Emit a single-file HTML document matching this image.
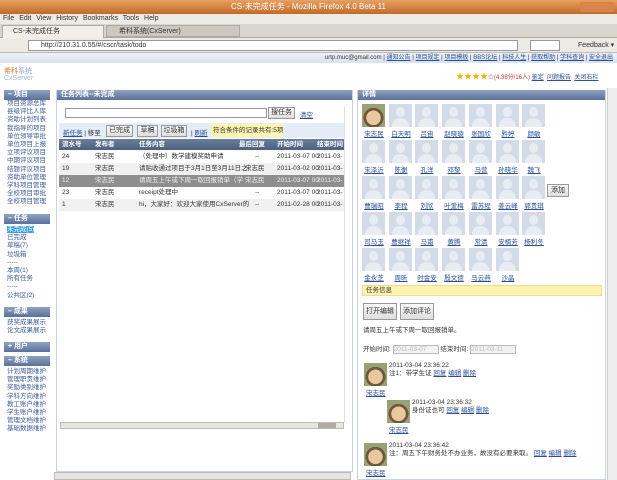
<!DOCTYPE html>
<html><head><meta charset="utf-8">
<style>
*{margin:0;padding:0;box-sizing:border-box}
body{width:617px;height:480px;overflow:hidden;background:#fff;font-family:"Liberation Sans","Noto Sans CJK SC",sans-serif;font-size:7px;color:#333;position:relative}
.a{position:absolute;white-space:nowrap}
.lnk{color:#2a4f9a;text-decoration:underline}
.hd{background:linear-gradient(#8fa3c0,#5a7199);color:#fff;font-weight:bold;font-size:7px;padding-left:4px;line-height:10px;height:10px}
.av{position:absolute;width:23px;height:23px;background:#d3dbe8}
.av:before{content:"";position:absolute;left:7px;top:3px;width:9px;height:10px;border-radius:50%;background:#e8edf4}
.av:after{content:"";position:absolute;left:3px;top:14px;width:17px;height:9px;border-radius:8px 8px 0 0;background:#e8edf4}
.nm{position:absolute;width:26px;text-align:center;font-size:6.5px;color:#2a4f9a;text-decoration:underline}
.face{position:absolute;width:23px;height:23px;background:radial-gradient(circle at 50% 60%,#e9c8a0 0 40%,#6b5a3a 41% 55%,#9aa078 56%)}
.btn{position:absolute;border:1px solid #999;background:linear-gradient(#fafafa,#ddd);font-size:7px;text-align:center}
</style></head><body>
<!-- title bar -->
<div class="a" style="left:0;top:0;width:617px;height:14px;background:linear-gradient(#e8a060,#c06a2a);color:#fff;font-size:8px;line-height:14px;text-align:center">CS-未完成任务 - Mozilla Firefox 4.0 Beta 11</div>
<div class="a" style="left:580px;top:2px;width:34px;height:10px;background:#d8844a;border-radius:2px"></div>
<!-- menu -->
<div class="a" style="left:0;top:14px;width:617px;height:10px;background:#ede9e3;font-size:7px;line-height:10px;padding-left:3px;word-spacing:3px">File Edit View History Bookmarks Tools Help</div>
<!-- tabs -->
<div class="a" style="left:0;top:24px;width:617px;height:14px;background:#d9d4cc;border-bottom:1px solid #aaa"></div>
<div class="a" style="left:2px;top:25px;width:102px;height:13px;background:#f2efea;border:1px solid #aaa;border-bottom:none;font-size:7px;line-height:12px;padding-left:10px">CS-未完成任务</div>
<div class="a" style="left:106px;top:25px;width:134px;height:12px;background:#cdc7be;border:1px solid #aaa;font-size:7px;line-height:11px;padding-left:12px">希科系统(CxServer)</div>
<!-- nav -->
<div class="a" style="left:0;top:38px;width:617px;height:15px;background:#ede9e3;border-bottom:1px solid #bbb"></div>
<div class="a" style="left:28px;top:40px;width:490px;height:11px;background:#fff;border:1px solid #999;font-size:7px;line-height:9px;padding-left:12px">http://210.31.0.55/#/cscr/task/todo</div>
<div class="a" style="left:530px;top:40px;width:30px;height:11px;background:#fff;border:1px solid #999"></div>
<div class="a" style="left:578px;top:40px;font-size:7px;line-height:11px">Feedback ▾</div>
<!-- top links -->
<div class="a" style="left:0;top:53px;width:617px;height:10px;background:linear-gradient(#eef2f8,#d8e1ee);font-size:6px;line-height:10px;text-align:right;padding-right:4px">urtp.muc@gmail.com | <span class="lnk">通知公告</span> | <span class="lnk">项目规定</span> | <span class="lnk">项目模板</span> | <span class="lnk">BBS论坛</span> | <span class="lnk">科技人生</span> | <span class="lnk">获取帮助</span> | <span class="lnk">学科查询</span> | <span class="lnk">安全退出</span></div>
<!-- logo -->
<div class="a" style="left:4px;top:68px;font-size:7px;line-height:7px;color:#e07a30">希科<span style="color:#8aa6d0">系统</span><br><span style="color:#a9bbd8">CxServer</span></div>
<div class="a" style="left:456px;top:71px;font-size:6px;color:#c33"><span style="color:#f0b000;font-size:8px">★★★★</span>☆(4.38分/16人) <span class="lnk">鉴定</span> &nbsp;<span class="lnk">问题报告</span> &nbsp;<span class="lnk">关闭右栏</span></div>
<!-- left sidebar -->
<div class="a hd" style="left:4px;top:90px;width:46px">– 项目</div>
<div class="a" style="left:7px;top:100px;font-size:6.5px;line-height:8.2px;color:#3a5a9a">项目资源总库<br>县级评比人库<br>资助计划列表<br>我指导的项目<br>单位领导审批<br>单位项目上报<br>立项评议项目<br>中期评议项目<br>结题评议项目<br>资助单位管理<br>学科项目管理<br>全校项目审批<br>全校项目管理</div>
<div class="a hd" style="left:4px;top:214px;width:46px">– 任务</div>
<div class="a" style="left:7px;top:226px;font-size:6.5px;line-height:8.2px;color:#3a5a9a"><span style="background:#3aa0e8;color:#fff">未完成(5)</span><br>已完成<br>草稿(7)<br>垃圾箱<br>-----<br>本周(1)<br>所有任务<br>-----<br>公共区(2)</div>
<div class="a hd" style="left:4px;top:307px;width:46px">– 成果</div>
<div class="a" style="left:7px;top:319px;font-size:6.5px;line-height:8.2px;color:#3a5a9a">获奖成果展示<br>论文成果展示</div>
<div class="a hd" style="left:4px;top:342px;width:46px">+ 用户</div>
<div class="a hd" style="left:4px;top:356px;width:46px">– 系统</div>
<div class="a" style="left:7px;top:368px;font-size:6.5px;line-height:8.2px;color:#3a5a9a">计划周期维护<br>管理职责维护<br>奖励类别维护<br>学科方向维护<br>教工账户维护<br>学生账户维护<br>管理文档维护<br>基础数据维护</div>
<!-- middle -->
<div class="a" style="left:56px;top:90px;width:297px;height:382px;border:1px solid #c8d2e0"></div>
<div class="a hd" style="left:57px;top:90px;width:295px">任务列表--未完成</div>
<div class="a" style="left:65px;top:108px;width:202px;height:10px;border:1px solid #999"></div>
<div class="btn" style="left:268px;top:107px;width:27px;height:12px;line-height:10px">搜任务</div>
<div class="a lnk" style="left:300px;top:109px;font-size:6.5px">清空</div>
<div class="a" style="left:59px;top:123px;width:285px;height:15px;background:#e4ecf6"></div>
<div class="a" style="left:63px;top:127px;font-size:6.5px"><span class="lnk">新任务</span> | 移至</div>
<div class="btn" style="left:106px;top:125px;width:27px;height:12px;line-height:10px">已完成</div>
<div class="btn" style="left:137px;top:125px;width:21px;height:12px;line-height:10px">草稿</div>
<div class="btn" style="left:161px;top:125px;width:26px;height:12px;line-height:10px">垃圾箱</div>
<div class="a" style="left:191px;top:127px;font-size:6.5px">| <span class="lnk">刷新</span></div>
<div class="a" style="left:211px;top:124px;width:72px;height:13px;background:#fff4b0;font-size:6.5px;line-height:13px;padding-left:2px">符合条件的记录共有:5项</div>
<div class="a" style="left:59px;top:139px;width:285px;height:11px;background:linear-gradient(#6a7d9a,#4d6080);color:#fff;font-size:6.5px;line-height:11px;font-weight:bold">
<span class="a" style="left:3px">流水号</span><span class="a" style="left:36px">发布者</span><span class="a" style="left:80px">任务内容</span><span class="a" style="left:180px">最后回复</span><span class="a" style="left:218px">开始时间</span><span class="a" style="left:258px">结束时间</span></div>
<div class="a" style="left:59px;top:151px;width:285px;font-size:6.5px;line-height:12px">
<div style="height:12px;position:relative"><span class="a" style="left:3px">24</span><span class="a" style="left:36px">宋志民</span><span class="a" style="left:80px">（处理中）数学建模奖助申请</span><span class="a" style="left:196px">--</span><span class="a" style="left:218px">2011-03-07 00:</span><span class="a" style="left:258px">2011-03-</span></div>
<div style="height:12px;position:relative;background:#f0f0f0"><span class="a" style="left:3px">19</span><span class="a" style="left:36px">宋志民</span><span class="a" style="left:80px">请贴收通过项目于3月1日至3月11日之</span><span class="a" style="left:186px">宋志民</span><span class="a" style="left:218px">2011-03-02 00:</span><span class="a" style="left:258px">2011-03-</span></div>
<div style="height:12px;position:relative;background:#8e8e8e;color:#eee"><span class="a" style="left:3px">12</span><span class="a" style="left:36px">宋志民</span><span class="a" style="left:80px">请周五上午或下周一取回报销单（学</span><span class="a" style="left:186px">宋志民</span><span class="a" style="left:218px">2011-03-07 00:</span><span class="a" style="left:258px">2011-03-</span></div>
<div style="height:12px;position:relative"><span class="a" style="left:3px">23</span><span class="a" style="left:36px">宋志民</span><span class="a" style="left:80px">receipt处理中</span><span class="a" style="left:196px">--</span><span class="a" style="left:218px">2011-03-07 00:</span><span class="a" style="left:258px">2011-03-</span></div>
<div style="height:12px;position:relative;background:#f0f0f0"><span class="a" style="left:3px">1</span><span class="a" style="left:36px">宋志民</span><span class="a" style="left:80px">hi，大家好：欢迎大家使用CxServer的</span><span class="a" style="left:196px">--</span><span class="a" style="left:218px">2011-02-28 00:</span><span class="a" style="left:258px">2011-03-</span></div>
</div>
<div class="a" style="left:344px;top:107px;width:1px;height:315px;background:#dde"></div>
<div class="a" style="left:60px;top:422px;width:284px;height:7px;background:#e8e4de;border:1px solid #bbb"></div>
<div class="a" style="left:318px;top:423px;width:18px;height:5px;background:#b5aaa0"></div>
<div class="a" style="left:54px;top:472px;width:297px;height:8px;background:#e8e4de;border:1px solid #bbb"></div>
<!-- right -->
<div class="a" style="left:357px;top:90px;width:249px;height:390px;border:1px solid #c8d2e0"></div>
<div class="a hd" style="left:358px;top:90px;width:247px">详情</div>
<div class="a" style="left:607px;top:88px;width:10px;height:392px;background:#eee;border-left:1px solid #ccc"></div>
<div class="face" style="left:362px;top:104px"></div>
<div class="av" style="left:389px;top:104px"></div><div class="av" style="left:415px;top:104px"></div><div class="av" style="left:442px;top:104px"></div><div class="av" style="left:469px;top:104px"></div><div class="av" style="left:496px;top:104px"></div><div class="av" style="left:522px;top:104px"></div>
<div class="nm" style="left:361px;top:128px">宋志民</div><div class="nm" style="left:388px;top:128px">白天明</div><div class="nm" style="left:414px;top:128px">吕宙</div><div class="nm" style="left:441px;top:128px">赵晓璇</div><div class="nm" style="left:468px;top:128px">张国欣</div><div class="nm" style="left:495px;top:128px">黔婷</div><div class="nm" style="left:521px;top:128px">颜敏</div>
<div class="av" style="left:362px;top:140px"></div><div class="av" style="left:389px;top:140px"></div><div class="av" style="left:415px;top:140px"></div><div class="av" style="left:442px;top:140px"></div><div class="av" style="left:469px;top:140px"></div><div class="av" style="left:496px;top:140px"></div><div class="av" style="left:522px;top:140px"></div>
<div class="nm" style="left:361px;top:164px">宋泽沂</div><div class="nm" style="left:388px;top:164px">陈衡</div><div class="nm" style="left:414px;top:164px">孔洋</div><div class="nm" style="left:441px;top:164px">邓黎</div><div class="nm" style="left:468px;top:164px">马营</div><div class="nm" style="left:495px;top:164px">孙晓华</div><div class="nm" style="left:521px;top:164px">魏飞</div>
<div class="av" style="left:362px;top:176px"></div><div class="av" style="left:389px;top:176px"></div><div class="av" style="left:415px;top:176px"></div><div class="av" style="left:442px;top:176px"></div><div class="av" style="left:469px;top:176px"></div><div class="av" style="left:496px;top:176px"></div><div class="av" style="left:522px;top:176px"></div>
<div class="nm" style="left:361px;top:200px">曹瑞昭</div><div class="nm" style="left:388px;top:200px">李程</div><div class="nm" style="left:414px;top:200px">刘欣</div><div class="nm" style="left:441px;top:200px">叶爱梅</div><div class="nm" style="left:468px;top:200px">雷苏程</div><div class="nm" style="left:495px;top:200px">姜云峰</div><div class="nm" style="left:521px;top:200px">郭贵琪</div>
<div class="btn" style="left:547px;top:184px;width:22px;height:13px;line-height:11px">添加</div>
<div class="av" style="left:362px;top:212px"></div><div class="av" style="left:389px;top:212px"></div><div class="av" style="left:415px;top:212px"></div><div class="av" style="left:442px;top:212px"></div><div class="av" style="left:469px;top:212px"></div><div class="av" style="left:496px;top:212px"></div><div class="av" style="left:522px;top:212px"></div>
<div class="nm" style="left:361px;top:236px">司马玉</div><div class="nm" style="left:388px;top:236px">曹继祥</div><div class="nm" style="left:414px;top:236px">马甫</div><div class="nm" style="left:441px;top:236px">黄腾</div><div class="nm" style="left:468px;top:236px">常清</div><div class="nm" style="left:495px;top:236px">安楠芳</div><div class="nm" style="left:521px;top:236px">杨利冬</div>
<div class="av" style="left:362px;top:248px"></div><div class="av" style="left:389px;top:248px"></div><div class="av" style="left:415px;top:248px"></div><div class="av" style="left:442px;top:248px"></div><div class="av" style="left:469px;top:248px"></div><div class="av" style="left:496px;top:248px"></div>
<div class="nm" style="left:361px;top:272px">金永芝</div><div class="nm" style="left:388px;top:272px">周昕</div><div class="nm" style="left:414px;top:272px">时金安</div><div class="nm" style="left:441px;top:272px">殷文德</div><div class="nm" style="left:468px;top:272px">马云燕</div><div class="nm" style="left:495px;top:272px">沙晶</div>
<div class="a" style="left:362px;top:285px;width:240px;height:11px;background:#fdf3b0;border:1px solid #eedd90;font-size:6.5px;line-height:9px;padding-left:3px">任务信息</div>
<div class="btn" style="left:363px;top:303px;width:34px;height:17px;line-height:15px">打开编辑</div>
<div class="btn" style="left:400px;top:303px;width:34px;height:17px;line-height:15px">添加评论</div>
<div class="a" style="left:363px;top:324px;font-size:6.5px">请周五上午或下周一取回报销单。</div>
<div class="a" style="left:363px;top:345px;font-size:6.5px;line-height:10px">开始时间: <span style="display:inline-block;width:46px;height:9px;border:1px solid #bbb;background:#f2f2f2;color:#bbb;vertical-align:middle;line-height:7px">2011-03-07</span> 结束时间: <span style="display:inline-block;width:46px;height:9px;border:1px solid #bbb;background:#f2f2f2;color:#bbb;vertical-align:middle;line-height:7px">2011-03-11</span></div>
<div class="face" style="left:364px;top:363px"></div>
<div class="a" style="left:389px;top:362px;font-size:6.5px;line-height:8px">2011-03-04 23:36:22<br>注1：带学生证 <span class="lnk">回复</span> <span class="lnk">编辑</span> <span class="lnk">删除</span></div>
<div class="a lnk" style="left:366px;top:387px;font-size:6.5px">宋志民</div>
<div class="face" style="left:387px;top:400px"></div>
<div class="a" style="left:412px;top:399px;font-size:6.5px;line-height:8px">2011-03-04 23:36:32<br>身份证也可 <span class="lnk">回复</span> <span class="lnk">编辑</span> <span class="lnk">删除</span></div>
<div class="a lnk" style="left:389px;top:424px;font-size:6.5px">宋志民</div>
<div class="face" style="left:364px;top:443px"></div>
<div class="a" style="left:389px;top:442px;font-size:6.5px;line-height:8px">2011-03-04 23:36:42<br>注：周五下午财务处不办业务，故没有必要来取。 <span class="lnk">回复</span> <span class="lnk">编辑</span> <span class="lnk">删除</span></div>
<div class="a lnk" style="left:366px;top:467px;font-size:6.5px">宋志民</div>
</body></html>
